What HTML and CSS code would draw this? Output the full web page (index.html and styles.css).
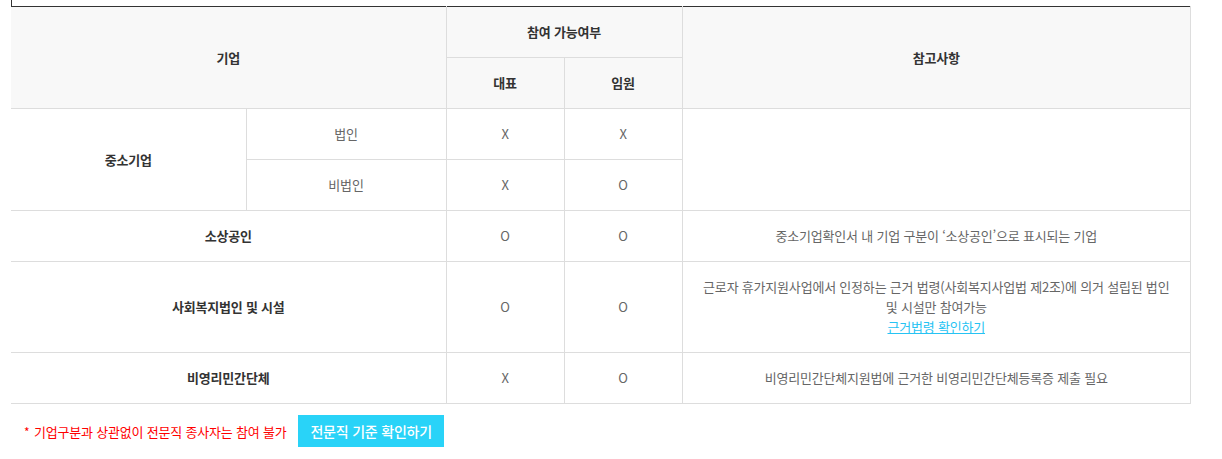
FILE: index.html
```html
<!DOCTYPE html>
<html lang="ko">
<head>
  <meta charset="UTF-8">
  <title>참여 가능여부</title>
  <link rel="stylesheet" href="styles.css">
</head>
<body>
  <div class="wrap">
    <div class="top-box"></div>
    <table class="tbl">
      <colgroup>
        <col class="c1"><col class="c2"><col class="c3"><col class="c4"><col class="c5">
      </colgroup>
      <thead>
        <tr>
          <th colspan="2" rowspan="2">기업</th>
          <th colspan="2">참여 가능여부</th>
          <th rowspan="2">참고사항</th>
        </tr>
        <tr>
          <th>대표</th>
          <th>임원</th>
        </tr>
      </thead>
      <tbody>
        <tr>
          <td rowspan="2" class="name">중소기업</td>
          <td>법인</td>
          <td>X</td>
          <td>X</td>
          <td rowspan="2"></td>
        </tr>
        <tr>
          <td>비법인</td>
          <td>X</td>
          <td>O</td>
        </tr>
        <tr>
          <td colspan="2" class="name">소상공인</td>
          <td>O</td>
          <td>O</td>
          <td>중소기업확인서 내 기업 구분이 ‘소상공인’으로 표시되는 기업</td>
        </tr>
        <tr>
          <td colspan="2" class="name">사회복지법인 및 시설</td>
          <td>O</td>
          <td>O</td>
          <td>근로자 휴가지원사업에서 인정하는 근거 법령(사회복지사업법 제2조)에 의거 설립된 법인<br>및 시설만 참여가능<br><a href="#" class="law-link">근거법령 확인하기</a></td>
        </tr>
        <tr>
          <td colspan="2" class="name">비영리민간단체</td>
          <td>X</td>
          <td>O</td>
          <td>비영리민간단체지원법에 근거한 비영리민간단체등록증 제출 필요</td>
        </tr>
      </tbody>
    </table>
    <div class="notice">
      <p class="notice-text"><span class="star">*</span>기업구분과 상관없이 전문직 종사자는 참여 불가</p>
      <button class="btn-check">전문직 기준 확인하기</button>
    </div>
  </div>
</body>
</html>
```

FILE: styles.css
```css
body { margin: 0; background: #fff; font-family: "Noto Sans CJK KR", "Noto Sans", sans-serif; color: #666; font-size: 13px; letter-spacing: -0.2px; }
.wrap { padding-left: 11px; width: 1180px; }
.top-box { height: 6px; border-left: 1px solid #333; }

.tbl { width: 1180px; border-collapse: collapse; table-layout: fixed; border-top: 1px solid #333; }
.c1 { width: 235px; }
.c2 { width: 200px; }
.c3 { width: 118px; }
.c4 { width: 118px; }
.tbl th, .tbl td {
  height: 50px; padding: 15px 10px; box-sizing: border-box;
  line-height: 20px; text-align: center; vertical-align: middle;
  border: 1px solid #ddd;
}
.tbl tr > :first-child { border-left: none; }
.tbl th { background: #f8f8f8; color: #333; font-weight: bold; }
.tbl thead tr:first-child th { border-top: 1px solid #333; }
.tbl td.name { color: #333; font-weight: bold; }
.law-link { color: #27c3f3; }

.notice { display: flex; align-items: center; gap: 12px; margin-top: 11px; padding-left: 13px; }
.notice-text { margin: 0; color: #f00; }
.star { display: inline-block; width: 10px; font-size: 12px; }
.btn-check {
  height: 32px; padding: 0 12px; border: none; background: #29d3f8; color: #fff;
  font-family: inherit; font-size: 14px; font-weight: 500; letter-spacing: -0.2px; cursor: pointer;
}
```
